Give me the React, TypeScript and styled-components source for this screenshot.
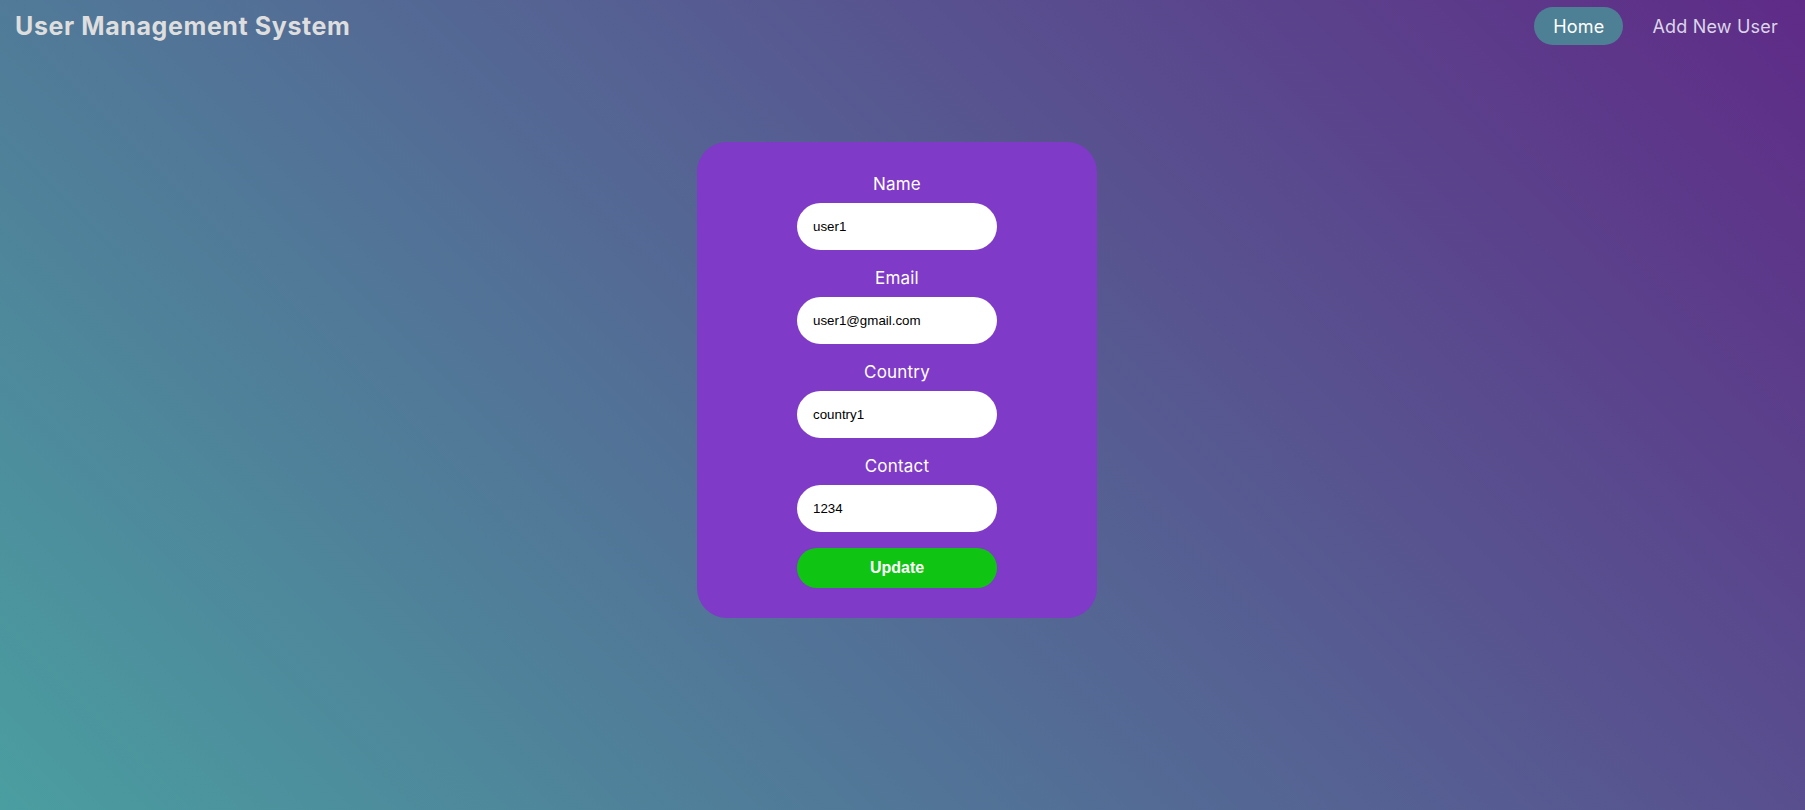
import styled, { createGlobalStyle } from 'styled-components'

const GlobalStyle = createGlobalStyle`
  html, body {
    margin: 0;
    padding: 0;
  }
  body {
    min-height: 100vh;
    font-family: Inter, "Noto Sans", sans-serif;
    background: linear-gradient(45deg, #4a9ea0, #5f2b87);
  }
`

const Page = styled.div`
  min-height: 100vh;
  display: flex;
  flex-direction: column;
`

const Header = styled.header`
  display: flex;
  align-items: center;
  justify-content: space-between;
  height: 52px;
  padding: 0 8px 0 15px;
`

const Brand = styled.h1`
  margin: 0;
  font-size: 25px;
  font-weight: 700;
  color: #dedede;
  letter-spacing: 0.6px;
`

const Nav = styled.nav`
  display: flex;
  gap: 10px;
`

const NavLink = styled.a<{ $active?: boolean }>`
  display: flex;
  align-items: center;
  height: 38px;
  padding: 0 19px;
  border-radius: 19px;
  font-size: 18px;
  letter-spacing: 0.2px;
  color: ${p => (p.$active ? '#ffffff' : '#dcd6e8')};
  background: ${p => (p.$active ? '#4e8095' : 'transparent')};
  text-decoration: none;
  cursor: pointer;
`

const Main = styled.main`
  display: flex;
  justify-content: center;
  padding: 90px 11px 0 0;
`

const Card = styled.form`
  width: 400px;
  box-sizing: border-box;
  padding: 30px 0 30px;
  background: #7f3ac8;
  border-radius: 30px;
  display: flex;
  flex-direction: column;
  align-items: center;
`

const Field = styled.div`
  display: flex;
  flex-direction: column;
  align-items: center;
  margin-bottom: 16px;
`

const Label = styled.label`
  height: 24px;
  line-height: 24px;
  font-size: 17px;
  letter-spacing: 0.2px;
  color: #ffffff;
  margin-bottom: 7px;
`

const Input = styled.input`
  width: 200px;
  height: 47px;
  box-sizing: border-box;
  border: none;
  outline: none;
  border-radius: 24px;
  padding: 0 16px;
  font-family: "Liberation Sans", Arial, sans-serif;
  font-size: 13.33px;
  color: #000;
  background: #fff;
`

const SubmitButton = styled.button`
  width: 200px;
  height: 40px;
  border: none;
  border-radius: 20px;
  background: #0fc413;
  color: #fff;
  font-family: "Liberation Sans", Arial, sans-serif;
  font-weight: 700;
  font-size: 16px;
  cursor: pointer;
`

const fields = [
  { label: 'Name', value: 'user1' },
  { label: 'Email', value: 'user1@gmail.com' },
  { label: 'Country', value: 'country1' },
  { label: 'Contact', value: '1234' },
]

const App = () => {
  return (
    <>
      <GlobalStyle />
      <Page>
        <Header>
          <Brand>User Management System</Brand>
          <Nav>
            <NavLink $active>Home</NavLink>
            <NavLink>Add New User</NavLink>
          </Nav>
        </Header>
        <Main>
          <Card onSubmit={e => e.preventDefault()}>
            {fields.map(f => (
              <Field key={f.label}>
                <Label>{f.label}</Label>
                <Input defaultValue={f.value} />
              </Field>
            ))}
            <SubmitButton type="submit">Update</SubmitButton>
          </Card>
        </Main>
      </Page>
    </>
  )
}

export default App
